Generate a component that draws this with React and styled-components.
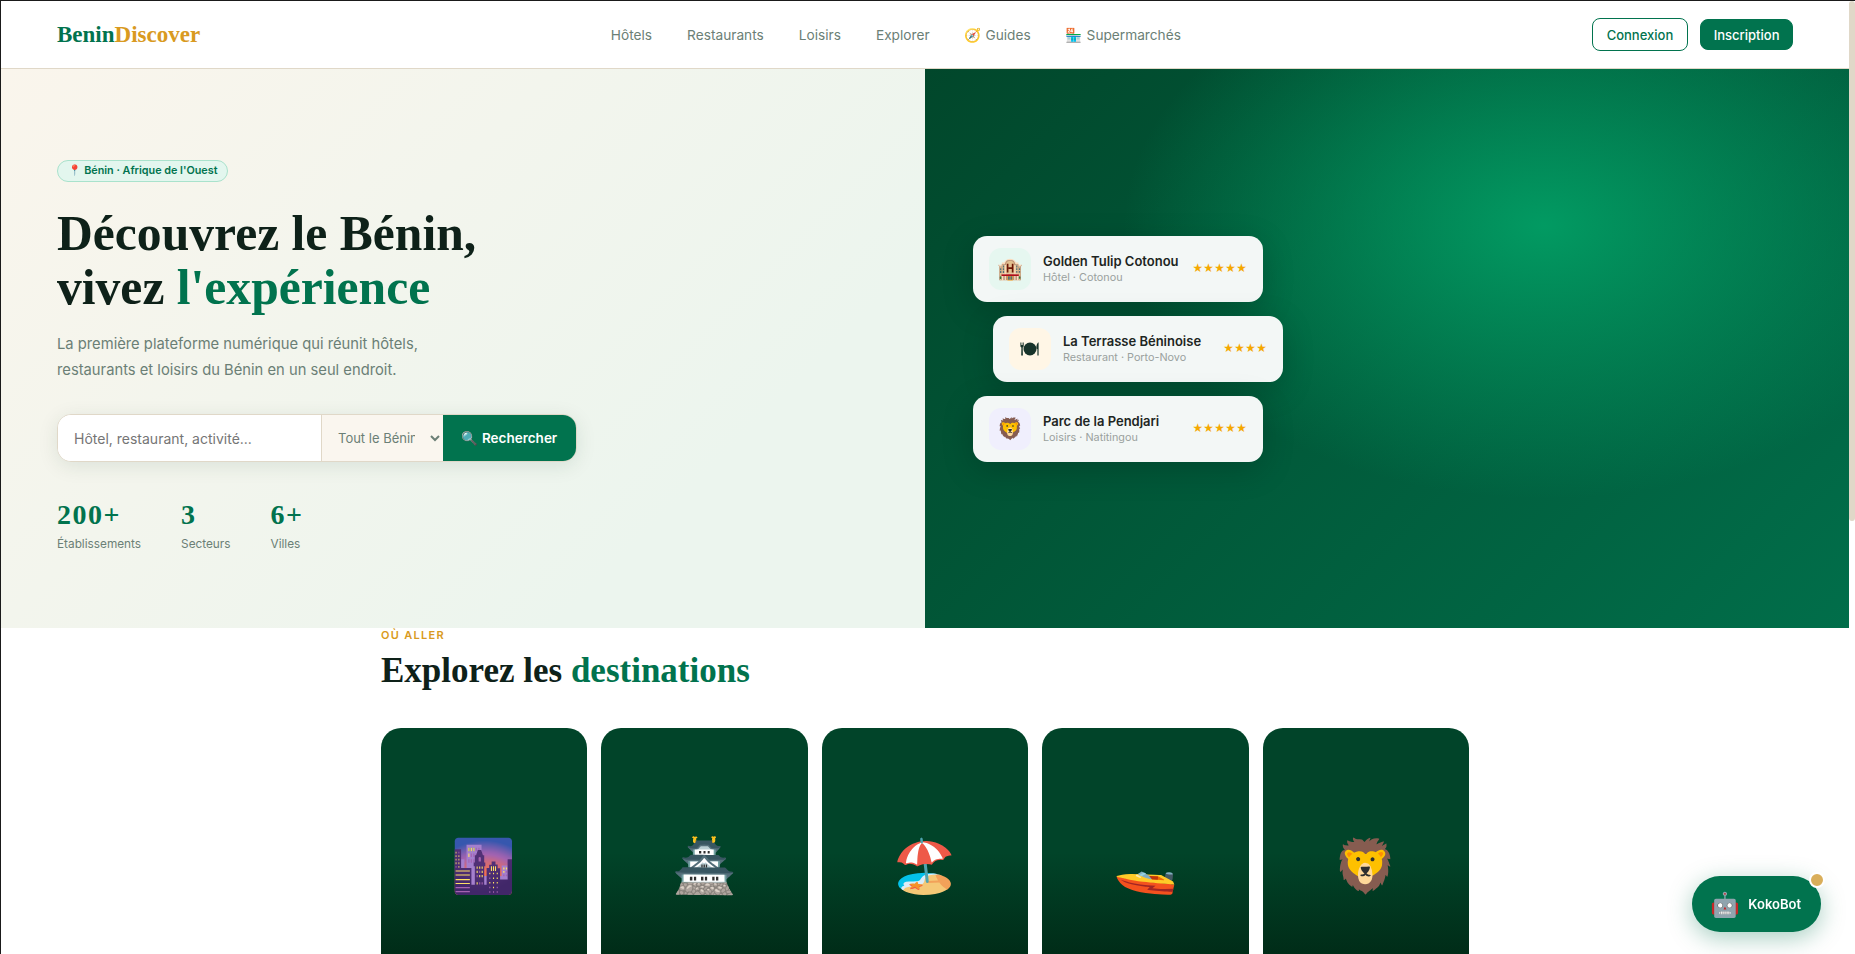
import React from "react";
import styled, { createGlobalStyle } from "styled-components";

const COLORS = {
  green: "#01734e",
  gold: "#d99a21",
  ink: "#0e2119",
  muted: "#6b7f76",
  line: "#e0d8c8",
};
const SERIF = `"Liberation Serif", serif`;
const SANS = `Inter, "Noto Color Emoji", sans-serif`;

const GlobalStyle = createGlobalStyle`
  html, body {
    margin: 0;
    height: 100%;
    overflow: hidden;
    background: #fff;
  }
  * {
    box-sizing: border-box;
  }
`;

const PlateIcon = () => (
  <svg width="20" height="14" viewBox="0 0 20 14" fill="#17332a">
    <circle cx="10" cy="7" r="6.5" />
    <path d="M0.4 0.5h0.7v2.6h0.6V0.5h0.7v2.6h0.6V0.5h0.7v3.4c0 .8-.5 1.3-1 1.5l.2 8.1H1.2l.2-8.1c-.5-.2-1-.7-1-1.5z" />
    <path d="M18.1 0.5c-1.2 1-1.7 3-1.7 5.2 0 .8.4 1.2 1 1.3v6.5h1.2V0.5z" />
  </svg>
);

const NAV_LINKS = [
  "Hôtels",
  "Restaurants",
  "Loisirs",
  "Explorer",
  "🧭 Guides",
  "🏪 Supermarchés",
];

const PLACES = [
  { icon: "🏨", tint: "#e6f7f0", name: "Golden Tulip Cotonou", meta: "Hôtel · Cotonou", stars: 5 },
  { icon: <PlateIcon />, tint: "#fff6e6", name: "La Terrasse Béninoise", meta: "Restaurant · Porto-Novo", stars: 4, shifted: true },
  { icon: "🦁", tint: "#f0effd", name: "Parc de la Pendjari", meta: "Loisirs · Natitingou", stars: 5 },
];

const STATS = [
  { value: "200+", label: "Établissements" },
  { value: "3", label: "Secteurs" },
  { value: "6+", label: "Villes" },
];

const DESTINATIONS = ["🌆", "🏯", "🏖️", "🚤", "🦁"];

const App = () => {
  return (
    <Shell>
      <GlobalStyle />
      <Page>
        <Nav>
          <Logo>
            Benin<span>Discover</span>
          </Logo>
          <NavLinks>
            {NAV_LINKS.map((link) => (
              <NavLink key={link} href="#">
                {link}
              </NavLink>
            ))}
          </NavLinks>
          <NavActions>
            <OutlineButton>Connexion</OutlineButton>
            <SolidButton>Inscription</SolidButton>
          </NavActions>
        </Nav>
        <Hero>
          <HeroLeft>
            <Badge>📍 Bénin · Afrique de l'Ouest</Badge>
            <Title>
              Découvrez le Bénin,
              <br />
              vivez <em>l'expérience</em>
            </Title>
            <Lead>
              La première plateforme numérique qui réunit hôtels,
              <br />
              restaurants et loisirs du Bénin en un seul endroit.
            </Lead>
            <SearchBar>
              <SearchInput placeholder="Hôtel, restaurant, activité..." />
              <SearchSelect defaultValue="all">
                <option value="all">Tout le Bénin</option>
              </SearchSelect>
              <SearchButton>🔍 Rechercher</SearchButton>
            </SearchBar>
            <Stats>
              {STATS.map((stat) => (
                <div key={stat.label}>
                  <StatValue>{stat.value}</StatValue>
                  <StatLabel>{stat.label}</StatLabel>
                </div>
              ))}
            </Stats>
          </HeroLeft>
          <HeroRight>
            {PLACES.map((place) => (
              <PlaceCard key={place.name} $shifted={place.shifted}>
                <PlaceIcon $tint={place.tint}>{place.icon}</PlaceIcon>
                <PlaceText>
                  <PlaceName>{place.name}</PlaceName>
                  <PlaceMeta>{place.meta}</PlaceMeta>
                </PlaceText>
                <Rating>{"★".repeat(place.stars)}</Rating>
              </PlaceCard>
            ))}
          </HeroRight>
        </Hero>
        <Section>
          <Eyebrow>OÙ ALLER</Eyebrow>
          <SectionTitle>
            Explorez les <em>destinations</em>
          </SectionTitle>
          <DestinationGrid>
            {DESTINATIONS.map((emoji) => (
              <DestinationCard key={emoji}>{emoji}</DestinationCard>
            ))}
          </DestinationGrid>
        </Section>
      </Page>
      <ScrollRail>
        <ScrollThumb />
      </ScrollRail>
      <ChatButton>
        <ChatIcon>🤖</ChatIcon>
        KokoBot
        <ChatDot />
      </ChatButton>
    </Shell>
  );
};

const Shell = styled.div`
  display: flex;
  height: 100vh;
  overflow: hidden;
  border-top: 1px solid #1a1a1a;
  border-left: 1px solid #1a1a1a;
  font-family: ${SANS};
`;
const Page = styled.main`
  flex: 1;
  min-width: 0;
`;
const ScrollRail = styled.div`
  flex: none;
  width: 6px;
  background: #fff;
`;
const ScrollThumb = styled.div`
  height: 520px;
  background: ${COLORS.line};
  border-radius: 3px;
`;
const Nav = styled.header`
  display: flex;
  justify-content: space-between;
  align-items: center;
  height: 68px;
  padding: 0 56px;
  background: #fff;
  border-bottom: 1px solid ${COLORS.line};
`;
const Logo = styled.div`
  font-family: ${SERIF};
  font-weight: 700;
  font-size: 23px;
  color: ${COLORS.green};

  span {
    color: ${COLORS.gold};
  }
`;
const NavLinks = styled.nav`
  display: flex;
  gap: 35px;
`;
const NavLink = styled.a`
  color: ${COLORS.muted};
  font-size: 13.7px;
  text-decoration: none;
`;
const NavActions = styled.div`
  display: flex;
  align-items: center;
  gap: 12px;
`;
const OutlineButton = styled.button`
  height: 33px;
  padding: 0 14px;
  font: 500 13px ${SANS};
  color: ${COLORS.green};
  background: #fff;
  border: 1px solid ${COLORS.green};
  border-radius: 8px;
`;
const SolidButton = styled(OutlineButton)`
  height: 31px;
  padding: 0 12.5px;
  color: #fff;
  background: ${COLORS.green};
`;
const Hero = styled.section`
  display: grid;
  grid-template-columns: 1fr 1fr;
  height: 559px;
`;
const HeroLeft = styled.div`
  display: flex;
  flex-direction: column;
  align-items: flex-start;
  padding: 91px 56px 0;
  background: linear-gradient(135deg, #faf5ec 0%, #ecf5ee 75%);
`;
const Badge = styled.div`
  height: 22px;
  padding: 0 10px;
  font-size: 10.8px;
  font-weight: 600;
  line-height: 20px;
  color: ${COLORS.green};
  background: #e3f6ee;
  border: 1px solid #a9e2cc;
  border-radius: 20px;
`;
const Title = styled.h1`
  margin: 25px 0 17px;
  font-family: ${SERIF};
  font-size: 49.6px;
  font-weight: 700;
  line-height: 53.6px;
  color: ${COLORS.ink};

  em {
    font-style: normal;
    color: ${COLORS.green};
  }
`;
const Lead = styled.p`
  margin: 0 0 31px;
  font-size: 14.75px;
  line-height: 26px;
  color: ${COLORS.muted};
`;
const SearchBar = styled.div`
  display: flex;
  width: 520px;
  height: 48px;
  background: #fff;
  border: 1px solid ${COLORS.line};
  border-radius: 14px;
  overflow: hidden;
  box-shadow: 0 4px 20px rgba(1, 60, 40, 0.1);
`;
const SearchInput = styled.input`
  width: 263px;
  padding: 0 16px;
  border: none;
  outline: none;
  font: 14px ${SANS};

  &::placeholder {
    color: #757575;
  }
`;
const SearchSelect = styled.select`
  width: 122px;
  padding: 0 12px;
  border: none;
  border-left: 1px solid ${COLORS.line};
  outline: none;
  font: 13px ${SANS};
  color: ${COLORS.muted};
  background: #faf6ef;
`;
const SearchButton = styled.button`
  flex: 1;
  padding: 0;
  border: none;
  font: 600 13.5px ${SANS};
  color: #fff;
  background: ${COLORS.green};
`;
const Stats = styled.div`
  display: flex;
  gap: 40px;
  margin-top: 36px;
`;
const StatValue = styled.div`
  font-family: ${SERIF};
  font-size: 28px;
  font-weight: 700;
  line-height: 34px;
  letter-spacing: 1.5px;
  color: ${COLORS.green};
`;
const StatLabel = styled.div`
  margin-top: 5px;
  font-size: 11.8px;
  color: ${COLORS.muted};
`;
const HeroRight = styled.div`
  display: flex;
  flex-direction: column;
  justify-content: center;
  gap: 14px;
  padding-left: 48px;
  background:
    radial-gradient(ellipse at 67% 28%, #029a62 0%, rgba(1, 90, 58, 0) 48%),
    linear-gradient(135deg, #01472b 0%, #016e4a 100%);
`;
const PlaceCard = styled.div`
  display: flex;
  align-items: center;
  gap: 12px;
  width: 290px;
  height: 66px;
  margin-left: ${(p) => (p.$shifted ? "20px" : "0")};
  padding: 0 16px;
  background: #f3f7f6;
  border-radius: 14px;
  box-shadow: 0 8px 32px rgba(0, 0, 0, 0.18);
`;
const PlaceIcon = styled.div`
  display: flex;
  flex: none;
  align-items: center;
  justify-content: center;
  width: 42px;
  height: 42px;
  font-family: "Noto Color Emoji", sans-serif;
  font-size: 21px;
  background: ${(p) => p.$tint};
  border-radius: 12px;
`;
const PlaceText = styled.div`
  flex: 1;
  min-width: 0;
`;
const PlaceName = styled.div`
  font-size: 13px;
  font-weight: 600;
  line-height: 18px;
  white-space: nowrap;
  color: #1d2522;
`;
const PlaceMeta = styled.div`
  font-size: 10.8px;
  line-height: 16px;
  white-space: nowrap;
  color: #9aa19e;
`;
const Rating = styled.div`
  flex: none;
  font-size: 10.5px;
  color: #f5a800;
`;
const Section = styled.section`
  width: 1088px;
  margin: 0 auto;
`;
const Eyebrow = styled.div`
  font-size: 11px;
  font-weight: 600;
  letter-spacing: 1.3px;
  line-height: 14px;
  color: ${COLORS.gold};
`;
const SectionTitle = styled.h2`
  margin: 7px 0 35px;
  font-family: ${SERIF};
  font-size: 35px;
  font-weight: 700;
  line-height: 44px;
  color: ${COLORS.ink};

  em {
    font-style: normal;
    color: ${COLORS.green};
  }
`;
const DestinationGrid = styled.div`
  display: grid;
  grid-template-columns: repeat(5, 1fr);
  gap: 14px;
`;
const DestinationCard = styled.div`
  display: flex;
  align-items: center;
  justify-content: center;
  height: 276px;
  font-family: "Noto Color Emoji", sans-serif;
  font-size: 52px;
  background: linear-gradient(180deg, #014429 0%, #014429 45%, #00200f 100%);
  border-radius: 20px;
`;
const ChatButton = styled.button`
  position: fixed;
  right: 34px;
  bottom: 22px;
  display: flex;
  align-items: center;
  gap: 8px;
  height: 56px;
  padding: 0 20px 0 18px;
  border: none;
  border-radius: 28px;
  font: 600 13px ${SANS};
  color: #fff;
  background: ${COLORS.green};
  box-shadow: 0 6px 24px rgba(1, 115, 78, 0.35);
`;
const ChatIcon = styled.span`
  font-size: 24px;
`;
const ChatDot = styled.span`
  position: absolute;
  top: -4px;
  right: -4px;
  width: 16px;
  height: 16px;
  background: #d9ae5a;
  border: 2px solid #fff;
  border-radius: 50%;
`;

export default App;
